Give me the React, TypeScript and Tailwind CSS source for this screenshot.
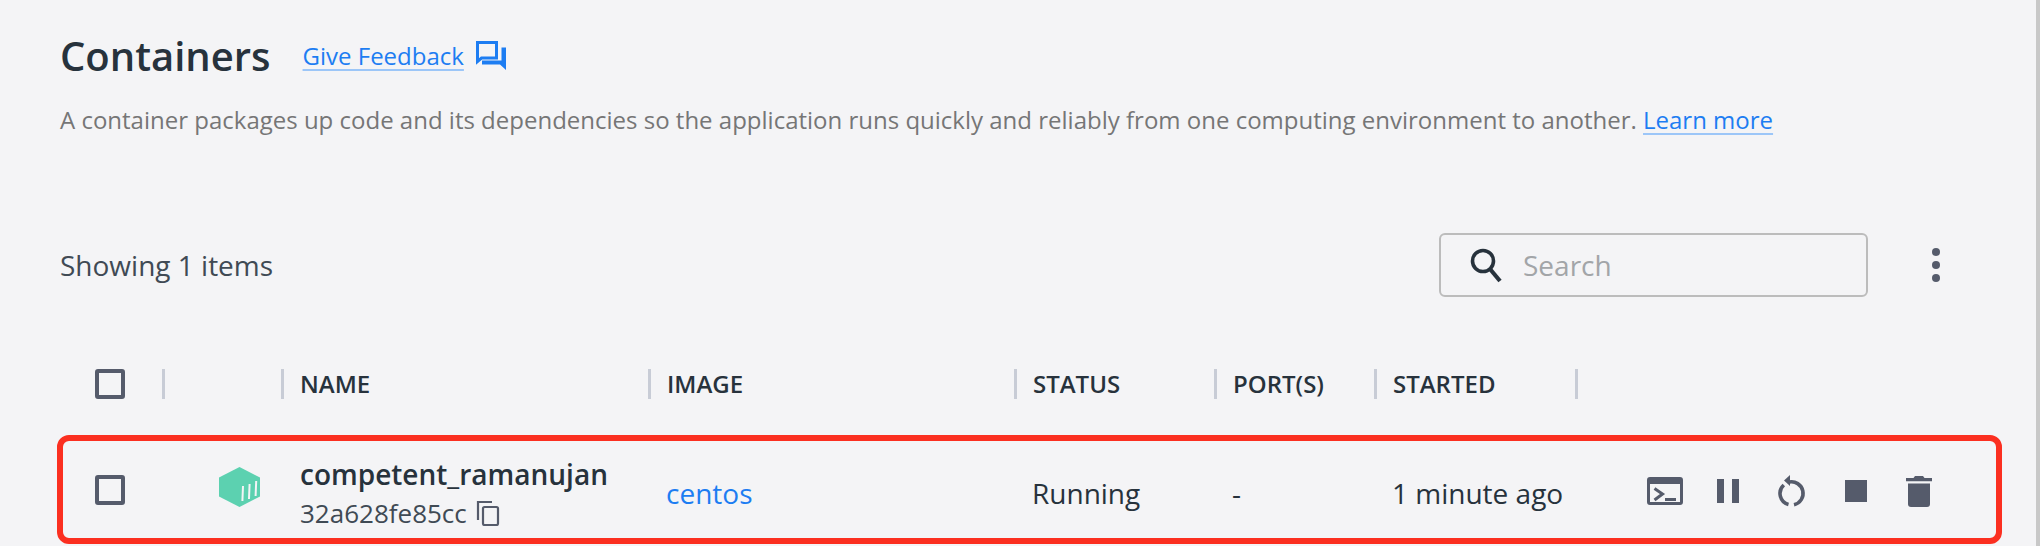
const gridCols = "grid items-center grid-cols-[102px_119px_367px_366px_200px_160px_201px_1fr]";
const rowCols = "grid items-center grid-cols-[99px_119px_367px_366px_200px_160px_201px_1fr]";

function Feedback() {
  return (
    <svg viewBox="0 0 30 30" className="w-[30px] h-[30px] ml-[12px]">
      <path d="M1.500 1.500h19v15.500H5.500L1.500 20.500z" fill="none" stroke="#1d7df2" strokeWidth="3" />
      <path d="M25.500 6.500H30V29l-6-5.500H6V19.500h19.500z" fill="#1d7df2" />
    </svg>
  );
}

function Checkbox() {
  return <div className="w-[30px] h-[30px] rounded-[3px] border-[4px] border-[#555b6b]" />;
}

function Header({ label }: { label?: string }) {
  return (
    <div className="flex items-center h-[30px] border-l-[3px] border-[#c8ccd6] pl-[16px] text-[24px] font-semibold text-[#27323c]">
      {label}
    </div>
  );
}

function ContainerIcon() {
  return (
    <svg viewBox="0 0 41 40" className="w-[41px] h-[40px]">
      <path d="M20.500 0 41 10.500v19L20.500 40 0 29.500V10.500z" fill="#5cd1b0" />
      <path d="M24 19l-.6 15M30.600 17l-.6 15M37.200 14l-.6 15" stroke="#f4f4f6" strokeWidth="2" />
    </svg>
  );
}

function Actions() {
  return (
    <div className="flex items-center justify-end pr-[64px] pt-[3px] h-full">
      <svg viewBox="0 0 36 28" className="w-[36px] h-[28px] mr-[34px]">
        <path fillRule="evenodd" fill="#555b6b" d="M3 0h30a3 3 0 0 1 3 3v22a3 3 0 0 1-3 3H3a3 3 0 0 1-3-3V3a3 3 0 0 1 3-3zM3 7v18h30V7z" />
        <path d="M7.500 11.500l8 5.500-8 6" fill="none" stroke="#555b6b" strokeWidth="3" />
        <rect x="18" y="21" width="11" height="3" fill="#555b6b" />
      </svg>
      <div className="flex gap-[8px] mr-[39px]">
        <div className="w-[7px] h-[24px] bg-[#555b6b]" />
        <div className="w-[7px] h-[24px] bg-[#555b6b]" />
      </div>
      <svg viewBox="0 0 28 32" className="w-[28px] h-[32px] mr-[39px]">
        <g fill="none" stroke="#555b6b" strokeWidth="3.600">
          <path d="M11 7.100A11.500 11.500 0 0 1 16 29.700" />
          <path d="M10.500 29.600A11.500 11.500 0 0 1 5.800 10" />
        </g>
        <path d="M6 5.500 12 0v11z" fill="#555b6b" />
      </svg>
      <div className="w-[22px] h-[22px] bg-[#555b6b] mr-[39px]" />
      <svg viewBox="0 0 26 31" className="w-[26px] h-[31px]">
        <path d="M9 0h8l1.500 2H26v3.200H0V2h7.500z" fill="#555b6b" />
        <path d="M2 7.500h22V28a3 3 0 0 1-3 3H5a3 3 0 0 1-3-3z" fill="#555b6b" />
      </svg>
    </div>
  );
}

export default function App() {
  return (
    <div className="flex w-[2040px] h-[546px] overflow-hidden bg-[#f4f4f6] font-['Open_Sans',sans-serif]">
      <main className="flex-1 pl-[60px] pr-[34px] pt-[32px]">
        <div className="flex items-center h-[48px]">
          <h1 className="text-[40px] font-semibold text-[#27323c] leading-none">Containers</h1>
          <a className="ml-[32px] text-[24px] text-[#1d7df2] underline decoration-2 decoration-[#9cc6f8] underline-offset-[4px]">Give Feedback</a>
          <Feedback />
        </div>

        <p className="mt-[24px] h-[32px] leading-[32px] text-[24px] text-[#767676] whitespace-nowrap">
          A container packages up code and its dependencies so the application runs quickly and reliably from one computing environment to another.{" "}
          <a className="text-[#1d7df2] underline decoration-2 decoration-[#9cc6f8] underline-offset-[4px]">Learn more</a>
        </p>

        <div className="flex items-center justify-between mt-[97px] mr-[60px] h-[64px]">
          <span className="text-[28px] text-[#404a54]">Showing 1 items</span>
          <div className="flex items-center">
            <div className="flex items-center w-[429px] h-[64px] rounded-[6px] border-2 border-[#bcbcbc] pl-[29px]">
              <svg viewBox="0 0 32 35" className="w-[32px] h-[35px] fill-none stroke-[#27323c]">
                <circle cx="13" cy="13" r="10.500" strokeWidth="3.600" />
                <path d="M20 21l10 12" strokeWidth="4.200" />
              </svg>
              <span className="ml-[21px] text-[28px] text-[#a2a5a8]">Search</span>
            </div>
            <div className="flex flex-col gap-[5px] ml-[64px] mr-[2px]">
              <div className="w-[8px] h-[8px] rounded-full bg-[#555b6b]" />
              <div className="w-[8px] h-[8px] rounded-full bg-[#555b6b]" />
              <div className="w-[8px] h-[8px] rounded-full bg-[#555b6b]" />
            </div>
          </div>
        </div>

        <div className={`${gridCols} mt-[57px] h-[60px]`}>
          <div className="pl-[35px]">
            <Checkbox />
          </div>
          <Header />
          <Header label="NAME" />
          <Header label="IMAGE" />
          <Header label="STATUS" />
          <Header label="PORT(S)" />
          <Header label="STARTED" />
          <div className="h-[30px] border-l-[3px] border-[#c8ccd6]" />
        </div>

        <div className="-ml-[3px] mt-[21px] h-[109px] rounded-[12px] border-[6px] border-[#fb2f20]">
          <div className={`${rowCols} h-full`}>
            <div className="pl-[32px]">
              <Checkbox />
            </div>
            <div className="pl-[57px] pb-[6px] flex items-center">
              <ContainerIcon />
            </div>
            <div className="pl-[19px] pt-[7px]">
              <div className="text-[28px] font-semibold text-[#27323c] leading-[36px] whitespace-nowrap">competent_ramanujan</div>
              <div className="flex items-center mt-[3px] text-[26px] text-[#404a54] leading-[36px]">
                32a628fe85cc
                <svg viewBox="0 0 24 26" className="ml-[9px] w-[24px] h-[26px] fill-none stroke-[#555b6b] stroke-[2.2]">
                  <path d="M2 20V2h14" />
                  <rect x="7" y="7" width="15" height="18" rx="1.500" />
                </svg>
              </div>
            </div>
            <div className="pl-[18px] pt-[7px] text-[28px] text-[#1d7df2]">centos</div>
            <div className="pl-[18px] pt-[7px] text-[28px] text-[#27323c]">Running</div>
            <div className="pl-[18px] pt-[7px] text-[28px] text-[#27323c]">-</div>
            <div className="pl-[18px] pt-[7px] text-[28px] text-[#27323c]">1 minute ago</div>
            <Actions />
          </div>
        </div>
      </main>
      <div className="w-[4px] bg-[#c8c8c8]" />
    </div>
  );
}
